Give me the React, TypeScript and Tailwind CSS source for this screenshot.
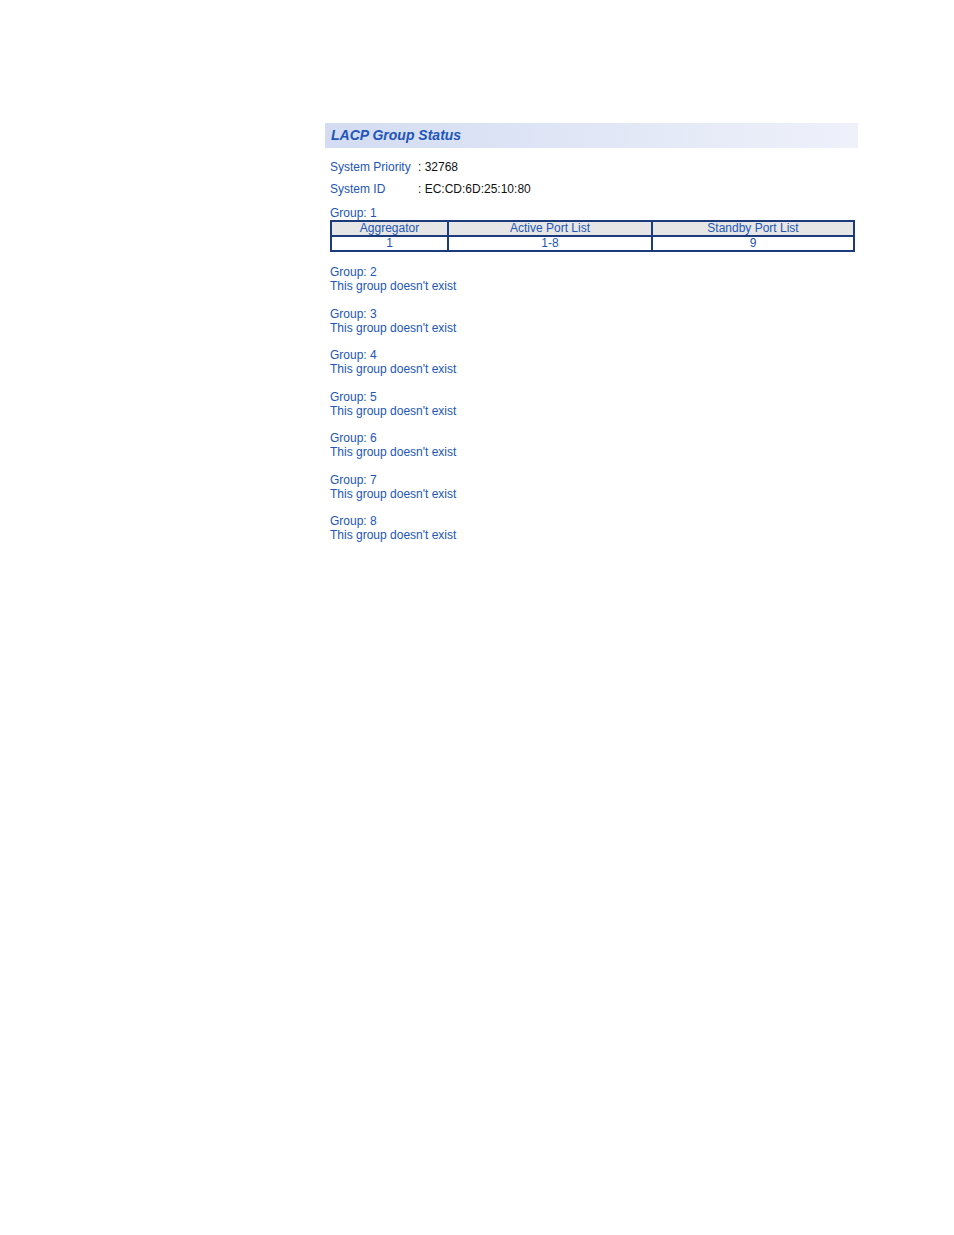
export default function App() {
  const groups = [2, 3, 4, 5, 6, 7, 8];
  return (
    <div className="w-[954px] h-[1235px] bg-white relative" style={{ fontFamily: '"Liberation Sans", Arial, sans-serif' }}>
      <div className="absolute left-[325px] top-[123px] w-[533px]">
        <div className="h-[25px] bg-gradient-to-r from-[#d3dcf2] to-[#eef1fa] pl-[6px] flex items-center">
          <span className="text-[14px] font-bold italic text-[#1f56b8]">LACP Group Status</span>
        </div>
        <div className="pl-[5px] text-[12px] text-[#2256b5]">
          <div className="mt-[12px] h-[14px] flex leading-[14px]"><span className="w-[88px]">System Priority</span><span className="text-[#111]">: 32768</span></div>
          <div className="mt-[8px] h-[14px] flex leading-[14px]"><span className="w-[88px]">System ID</span><span className="text-[#111]">: EC:CD:6D:25:10:80</span></div>
          <div className="mt-[10px] h-[14px] leading-[14px]">Group: 1</div>
          <table className="w-[525px] border-collapse border-2 border-[#1b3b7c] text-[12px] leading-[13px] text-center">
            <tbody>
              <tr className="bg-[#e6e6e6]">
                <td className="border-2 border-[#1b3b7c] w-[117px]">Aggregator</td>
                <td className="border-2 border-[#1b3b7c] w-[204px]">Active Port List</td>
                <td className="border-2 border-[#1b3b7c]">Standby Port List</td>
              </tr>
              <tr>
                <td className="border-2 border-[#1b3b7c]">1</td>
                <td className="border-2 border-[#1b3b7c]">1-8</td>
                <td className="border-2 border-[#1b3b7c]">9</td>
              </tr>
            </tbody>
          </table>
          <div className="mt-[13px] flex flex-col gap-[13.5px]">
            {groups.map(g => (
              <div key={g} className="leading-[14px]">
                <div>Group: {g}</div>
                <div>This group doesn't exist</div>
              </div>
            ))}
          </div>
        </div>
      </div>
    </div>
  );
}
